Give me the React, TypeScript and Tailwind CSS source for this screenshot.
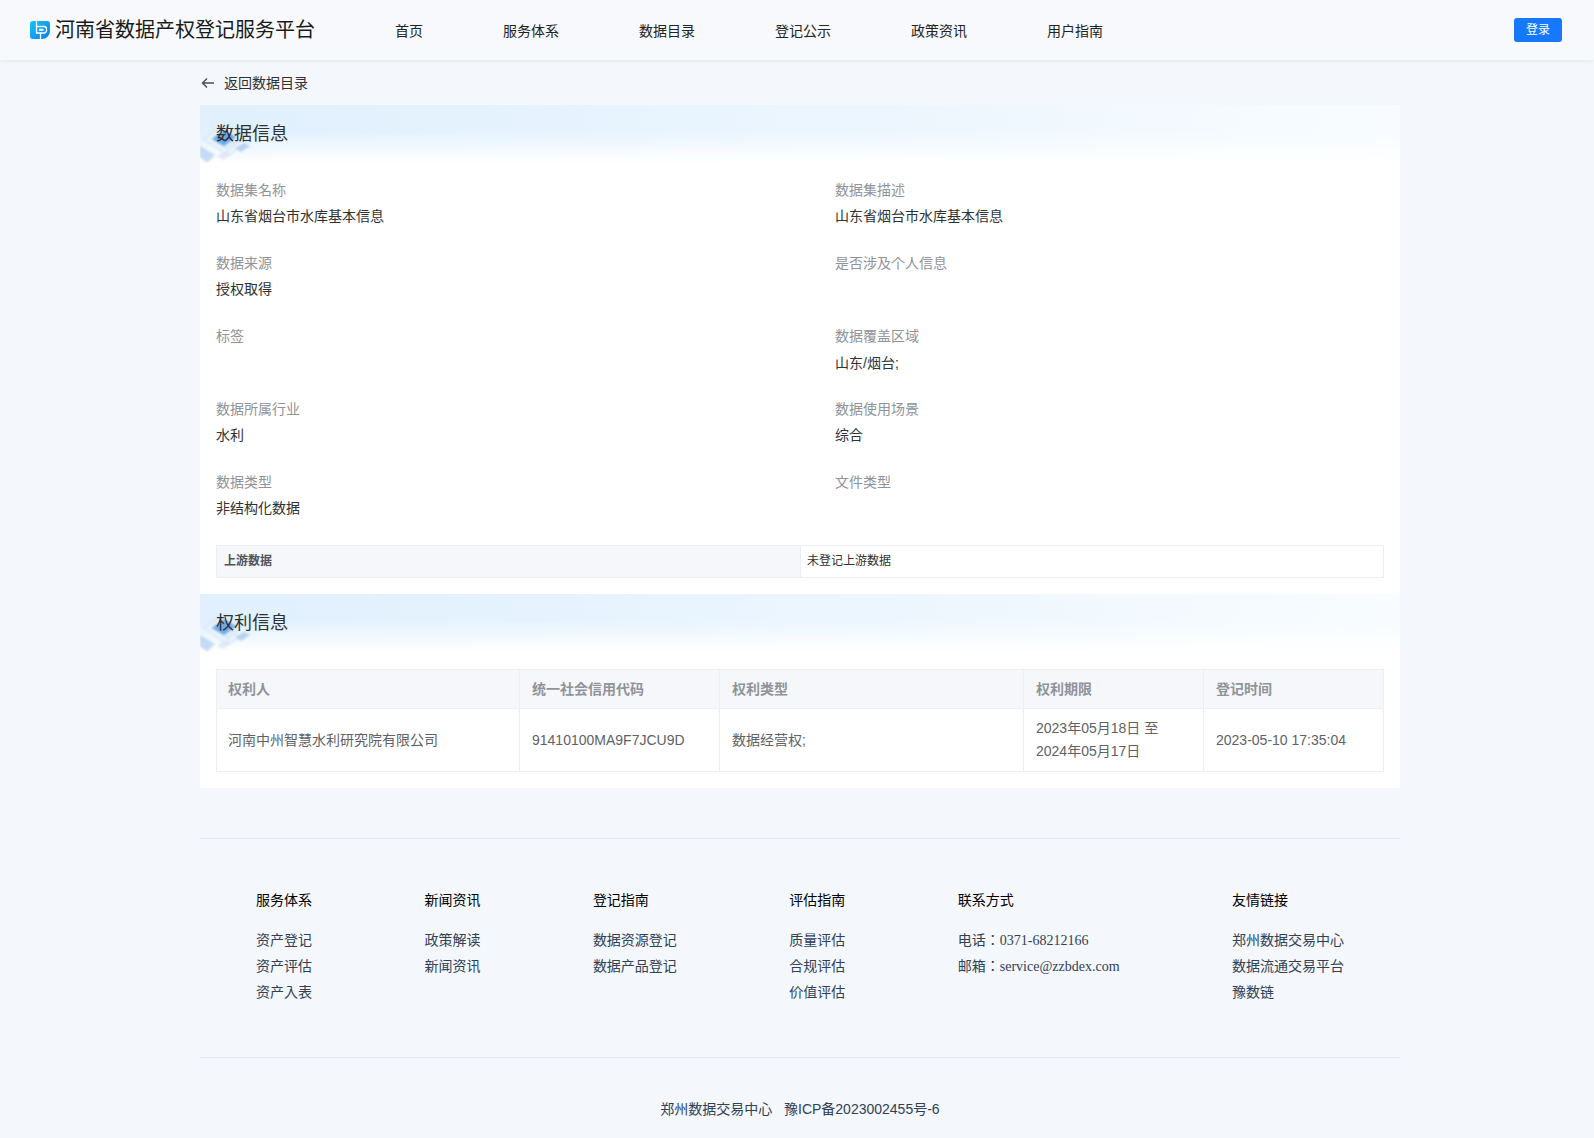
const navItems = ['首页', '服务体系', '数据目录', '登记公示', '政策资讯', '用户指南']

const infoRows = [
  [{ label: '数据集名称', value: '山东省烟台市水库基本信息' }, { label: '数据集描述', value: '山东省烟台市水库基本信息' }],
  [{ label: '数据来源', value: '授权取得' }, { label: '是否涉及个人信息', value: '' }],
  [{ label: '标签', value: '' }, { label: '数据覆盖区域', value: '山东/烟台;' }],
  [{ label: '数据所属行业', value: '水利' }, { label: '数据使用场景', value: '综合' }],
  [{ label: '数据类型', value: '非结构化数据' }, { label: '文件类型', value: '' }],
]

const footerCols = [
  { title: '服务体系', links: ['资产登记', '资产评估', '资产入表'] },
  { title: '新闻资讯', links: ['政策解读', '新闻资讯'] },
  { title: '登记指南', links: ['数据资源登记', '数据产品登记'] },
  { title: '评估指南', links: ['质量评估', '合规评估', '价值评估'] },
]

function Logo() {
  return (
    <svg width="20" height="20" viewBox="0 0 20 20" className="shrink-0">
      <defs>
        <linearGradient id="logoGrad" x1="0" y1="0" x2="1" y2="1">
          <stop offset="0" stopColor="#18c4f6" />
          <stop offset="1" stopColor="#0b7df3" />
        </linearGradient>
      </defs>
      <path d="M3 1h14a3 3 0 0 1 3 3v7a8 8 0 0 1-8 8H3a3 3 0 0 1-3-3V4a3 3 0 0 1 3-3z" fill="url(#logoGrad)" />
      <path d="M6.500 1v5.500H14a2.500 2.500 0 0 1 2.500 2.500v1.500a2.500 2.500 0 0 1-2.500 2.500H10.500V19" fill="none" stroke="#fff" strokeWidth="1.300" />
      <path d="M6.500 6.500V13h4" fill="none" stroke="#fff" strokeWidth="1.300" />
      <rect x="9" y="8.800" width="4.500" height="2" fill="#fff" />
    </svg>
  )
}

function SectionTitle({ title }: { title: string }) {
  return (
    <div className="relative h-[58px] overflow-hidden bg-[linear-gradient(180deg,rgba(255,255,255,0)_45%,#ffffff_100%),linear-gradient(90deg,#e0f0fd_0%,#e8f4fe_40%,#f8fcff_100%)]">
      <svg width="54" height="44" viewBox="0 0 54 44" className="absolute bottom-0 left-0 blur-[1px]">
        <path d="M2 20 24 5l26 17-22 16z" fill="#d8e8f9" opacity="0.8" />
        <path d="M8 20 24 9l20 13-16 12z" fill="none" stroke="#ffffff" strokeWidth="1.200" opacity="0.9" />
        <path d="M12 20l12-9 12 7-12 9z" fill="#5c9fe8" opacity="0.85" />
        <path d="M0 27l15 9-7 7H6L0 38z" fill="#a9caf0" opacity="0.65" />
        <path d="M35 29l9-5 6 3-9 6z" fill="#a9cbf0" opacity="0.8" />
        <path d="M17 37l9-5 5 3-8 6z" fill="#d5e4f6" opacity="0.7" />
      </svg>
      <h2 className="relative pl-4 pt-[18px] text-[18px] leading-[22px] font-normal text-[#303133]">{title}</h2>
    </div>
  )
}

export default function App() {
  const th = 'border-r border-b border-[#ebeef5] px-3 font-bold'
  const td = 'border-r border-b border-[#ebeef5] px-3'
  return (
    <div className="min-h-[1138px] bg-[#f4f7fc] font-['Liberation_Sans','Noto_Sans_CJK_JP',sans-serif] text-[14px]">
      <header className="flex h-[60px] items-center bg-[#f8f9fd] pl-[30px] pr-8 shadow-[0_1px_4px_rgba(0,21,41,0.08)]">
        <Logo />
        <span className="ml-[5px] w-[259px] text-[20px] whitespace-nowrap text-[#1a1a1a]">河南省数据产权登记服务平台</span>
        <nav className="ml-[81px] flex gap-20 pt-[3px]">
          {navItems.map((item) => <a key={item} className="text-[#222222]">{item}</a>)}
        </nav>
        <button className="ml-auto h-6 w-12 rounded-[3px] bg-[#1677ff] text-[12px] text-white">登录</button>
      </header>

      <main className="ml-[200px] w-[1200px]">
        <a className="flex h-[45px] items-center pt-[1px] text-[#303133]">
          <svg width="14" height="14" viewBox="0 0 14 14" fill="none" stroke="#4a4f57" strokeWidth="1.400" className="ml-[1px]">
            <path d="M13 7H1.500M6 2.500 1.500 7 6 11.500" />
          </svg>
          <span className="ml-[9px]">返回数据目录</span>
        </a>

        <div className="bg-white">
          <SectionTitle title="数据信息" />
          <div className="px-4 pb-4">
            <div className="pt-[17px]">
              {infoRows.map((row) => (
                <div key={row[0].label} className="grid h-[73px] grid-cols-[619px_1fr]">
                  {row.map((cell) => (
                    <div key={cell.label}>
                      <div className="leading-[20px] text-[#909399]">{cell.label}</div>
                      <div className={cell.label === '数据覆盖区域' ? 'mt-[7px] leading-[20px] text-[#303133]' : 'mt-[6px] leading-[20px] text-[#303133]'}>{cell.value}</div>
                    </div>
                  ))}
                </div>
              ))}
            </div>
            <div className="flex h-[33px] border border-[#ebeef5] text-[12px] leading-[30px]">
              <div className="w-[584px] border-r border-[#ebeef5] bg-[#f5f7fa] pl-[7px] font-bold text-[#505359]">上游数据</div>
              <div className="flex-1 pl-[6px] text-[#303133]">未登记上游数据</div>
            </div>
          </div>

          <SectionTitle title="权利信息" />
          <div className="px-4 pb-4 pt-[17px]">
            <div className="border-t border-[#ebeef5]">
              <table className="w-[1168px] table-fixed border-separate border-spacing-0 text-[#606266]">
                <colgroup>
                  <col className="w-[304px]" />
                  <col className="w-[200px]" />
                  <col className="w-[304px]" />
                  <col className="w-[180px]" />
                  <col className="w-[180px]" />
                </colgroup>
                <thead>
                  <tr className="h-[39px] bg-[#f5f7fa] text-left text-[#909399]">
                    <th className={`${th} shadow-[inset_1px_0_0_#ebeef5]`}>权利人</th>
                    <th className={th}>统一社会信用代码</th>
                    <th className={th}>权利类型</th>
                    <th className={th}>权利期限</th>
                    <th className={th}>登记时间</th>
                  </tr>
                </thead>
                <tbody>
                  <tr className="h-[63px] leading-[23px]">
                    <td className={`${td} shadow-[inset_1px_0_0_#ebeef5]`}>河南中州智慧水利研究院有限公司</td>
                    <td className={td}>91410100MA9F7JCU9D</td>
                    <td className={td}>数据经营权;</td>
                    <td className={td}>2023年05月18日 至<br />2024年05月17日</td>
                    <td className={td}>2023-05-10 17:35:04</td>
                  </tr>
                </tbody>
              </table>
            </div>
          </div>
        </div>

        <footer className="mt-[50px]">
          <div className="flex h-[220px] justify-between border-y border-[#e4e9f2] px-14 pt-[51px]">
            {footerCols.map((col) => (
              <div key={col.title}>
                <div className="mb-[17px] leading-[20px] text-[#000000]">{col.title}</div>
                {col.links.map((l) => <div key={l} className="leading-[26px] text-[#304156]">{l}</div>)}
              </div>
            ))}
            <div>
              <div className="mb-[18px] leading-[20px] text-[#000000]">联系方式</div>
              <div className="font-['Liberation_Serif','Noto_Sans_CJK_JP',serif] leading-[26px] text-[#304156]">电话：0371-68212166</div>
              <div className="font-['Liberation_Serif','Noto_Sans_CJK_JP',serif] leading-[26px] text-[#304156]">邮箱：service@zzbdex.com</div>
            </div>
            <div>
              <div className="mb-[17px] leading-[20px] text-[#000000]">友情链接</div>
              {['郑州数据交易中心', '数据流通交易平台', '豫数链'].map((l) => <div key={l} className="leading-[26px] text-[#304156]">{l}</div>)}
            </div>
          </div>
          <div className="pt-[41px] text-center leading-[20px] text-[#304156]">郑州数据交易中心&nbsp;&nbsp; 豫ICP备2023002455号-6</div>
        </footer>
      </main>
    </div>
  )
}
